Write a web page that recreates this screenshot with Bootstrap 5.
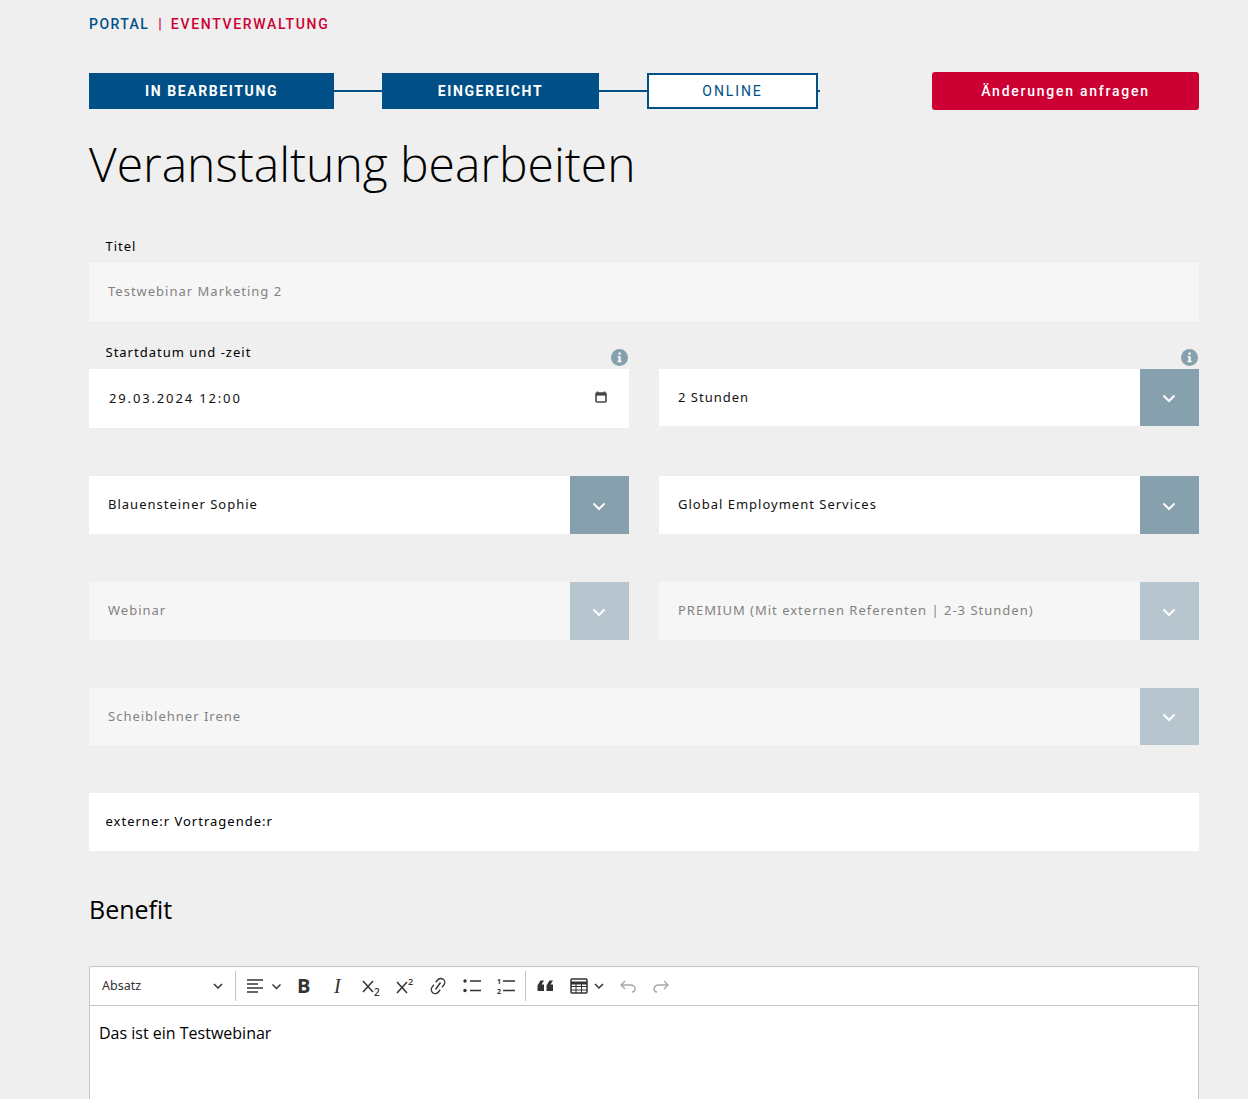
<!DOCTYPE html>
<html lang="de">
<head>
<meta charset="utf-8">
<title>Veranstaltung bearbeiten</title>
<link rel="stylesheet" href="https://cdn.jsdelivr.net/npm/bootstrap@5.3.0/dist/css/bootstrap.min.css">
<style>
html,body{height:1099px;overflow:hidden}
body{background:#efefef;font-family:"Noto Sans","Open Sans",sans-serif;color:#000}
.shell{width:1110px;margin-left:89px}
.crumbs{height:73px;padding-top:15px;font:500 14px/18px Roboto,sans-serif}
.crumb-a{color:#00508a;letter-spacing:1.45px}.crumb-b{color:#cc0033;letter-spacing:1.68px}.crumb-s{color:#cc0033;margin:0 9px}
.steps{height:36px}
.stepbox{height:36px;font:700 14px/18px Roboto,sans-serif;letter-spacing:1.6px;color:#fff;background:#005087;border:2px solid #005087}
.s1{width:245px}.s2{width:217px}.s3{width:171px;background:#fff;color:#005087;font-weight:400;letter-spacing:1.9px}
.stepline{height:2px;background:#005087}
.l1{width:48px}.l2{width:48px}.l3{width:2px;margin-right:auto}
.btn-change{width:267px;height:38px;margin-top:-1px;background:#cc0033;color:#fff;border:0;border-radius:3px;font:500 14px/18px Roboto,sans-serif;letter-spacing:1.75px}
.btn-change:hover{background:#cc0033;color:#fff}
.pagetitle{font:300 48px/58px "Open Sans",sans-serif;letter-spacing:-.02px;color:#000;margin:26px 0 0}
.lab{font-size:13px;line-height:18px;letter-spacing:1px;font-weight:400;color:#000;padding-left:16.5px;margin:0}
.lab1{margin-top:39px;height:31px;padding-top:5px}
.fieldbox{background:#fff;height:58px;font-size:13px;letter-spacing:1px;color:#111;padding-left:19px}
.fieldbox.off{background:#f6f6f6;color:#828282}
.gapper{--bs-gutter-x:30px;--bs-gutter-y:0}
.r-a{margin-top:18px}
.lab2{height:30px;padding-top:4px}
.hd{height:30px;position:relative}
.infodot{position:absolute;right:1px;bottom:3px;width:17px;height:17px}
.date{height:59px;padding-left:20px;padding-right:22px;letter-spacing:1.85px}
.calico{margin-top:-3px}
.h57{height:57px}
.chev{width:59px;background:#86a0ae}
.chev svg{margin:2px 2px 0 0}
.off .chev{background:#b7c6ce}
.mt48{margin-top:48px}
.ext{padding-left:16.5px;color:#000}
.benefit{font:500 25px/32px "Open Sans",sans-serif;letter-spacing:0;margin:42px 0 41px;color:#000}
.editor{background:#fff;border:1px solid #c4c4c4;border-bottom:0;border-radius:2px 2px 0 0;height:200px}
.tb{height:39px;border-bottom:1px solid #c4c4c4;padding-left:12px;color:#333}
.para{width:133px;font-size:12.5px;color:#333;padding-right:12px}
.sep{width:1px;height:30px;background:#c4c4c4;flex:none}
.sep2{margin-left:3px}
.tool{width:33.5px;height:24px;flex:none;color:#333;display:flex;align-items:center;justify-content:center}
.tool svg{display:block}
.tool-b{font:700 20px/24px "Open Sans",sans-serif}
.tool-i{font:italic 400 20px/24px "Liberation Serif",serif}
.first{margin-left:11px;width:40px;justify-content:flex-start}
.nudge{padding-left:2px}
.quo{margin-left:3px}
.tbl{width:38px;margin-left:6px}
.undo{margin-left:5px}
.edtext{font-size:16px;line-height:22px;padding:16px 9px;color:#000;font-family:"Open Sans",sans-serif}
</style>
</head>
<body>
<main class="shell">
  <div class="crumbs"><span class="crumb-a">PORTAL</span><span class="crumb-s">|</span><span class="crumb-b">EVENTVERWALTUNG</span></div>
  <div class="steps d-flex align-items-center">
    <div class="stepbox s1 d-flex align-items-center justify-content-center">IN BEARBEITUNG</div>
    <div class="stepline l1"></div>
    <div class="stepbox s2 d-flex align-items-center justify-content-center">EINGEREICHT</div>
    <div class="stepline l2"></div>
    <div class="stepbox s3 d-flex align-items-center justify-content-center">ONLINE</div>
    <div class="stepline l3"></div>
    <button type="button" class="btn btn-change p-0">Änderungen anfragen</button>
  </div>
  <h1 class="pagetitle">Veranstaltung bearbeiten</h1>

  <p class="lab lab1">Titel</p>
  <div class="fieldbox off d-flex align-items-center">Testwebinar Marketing 2</div>

  <div class="row gapper r-a">
    <div class="col-6">
      <div class="hd"><p class="lab lab2">Startdatum und -zeit</p>
        <svg class="infodot" viewBox="0 0 17 17"><circle cx="8.5" cy="8.5" r="8.5" fill="#86a0ae"/><rect x="7.5" y="3.5" width="2.2" height="2.2" fill="#fff"/><path d="M6.6 7.2h3v4.6h1v1.4H6.6v-1.4h1V8.6h-1z" fill="#fff"/></svg>
      </div>
      <div class="fieldbox date d-flex align-items-center justify-content-between">
        <span>29.03.2024 12:00</span>
        <svg class="calico" width="12" height="12" viewBox="0 0 12 12"><path d="M2.5 0.5v1.5M9.5 0.5v1.5" stroke="#444" stroke-width="1.6"/><rect x="1" y="2" width="10" height="9" rx="1" fill="none" stroke="#444" stroke-width="1.6"/><rect x="1" y="2" width="10" height="2.6" fill="#444"/></svg>
      </div>
    </div>
    <div class="col-6">
      <div class="hd">
        <svg class="infodot" viewBox="0 0 17 17"><circle cx="8.5" cy="8.5" r="8.5" fill="#86a0ae"/><rect x="7.5" y="3.5" width="2.2" height="2.2" fill="#fff"/><path d="M6.6 7.2h3v4.6h1v1.4H6.6v-1.4h1V8.6h-1z" fill="#fff"/></svg>
      </div>
      <div class="fieldbox h57 d-flex align-items-stretch pe-0">
        <span class="flex-grow-1 d-flex align-items-center">2 Stunden</span>
        <span class="chev d-flex align-items-center justify-content-center"><svg width="14" height="9" viewBox="0 0 14 9"><path d="M1.5 1.5 7 7l5.5-5.5" fill="none" stroke="#fff" stroke-width="2"/></svg></span>
      </div>
    </div>
  </div>

  <div class="row gapper mt48">
    <div class="col-6">
      <div class="fieldbox d-flex align-items-stretch pe-0">
        <span class="flex-grow-1 d-flex align-items-center">Blauensteiner Sophie</span>
        <span class="chev d-flex align-items-center justify-content-center"><svg width="14" height="9" viewBox="0 0 14 9"><path d="M1.5 1.5 7 7l5.5-5.5" fill="none" stroke="#fff" stroke-width="2"/></svg></span>
      </div>
    </div>
    <div class="col-6">
      <div class="fieldbox d-flex align-items-stretch pe-0">
        <span class="flex-grow-1 d-flex align-items-center">Global Employment Services</span>
        <span class="chev d-flex align-items-center justify-content-center"><svg width="14" height="9" viewBox="0 0 14 9"><path d="M1.5 1.5 7 7l5.5-5.5" fill="none" stroke="#fff" stroke-width="2"/></svg></span>
      </div>
    </div>
  </div>

  <div class="row gapper mt48">
    <div class="col-6">
      <div class="fieldbox off d-flex align-items-stretch pe-0">
        <span class="flex-grow-1 d-flex align-items-center">Webinar</span>
        <span class="chev d-flex align-items-center justify-content-center"><svg width="14" height="9" viewBox="0 0 14 9"><path d="M1.5 1.5 7 7l5.5-5.5" fill="none" stroke="#fff" stroke-width="2"/></svg></span>
      </div>
    </div>
    <div class="col-6">
      <div class="fieldbox off d-flex align-items-stretch pe-0">
        <span class="flex-grow-1 d-flex align-items-center">PREMIUM (Mit externen Referenten | 2-3 Stunden)</span>
        <span class="chev d-flex align-items-center justify-content-center"><svg width="14" height="9" viewBox="0 0 14 9"><path d="M1.5 1.5 7 7l5.5-5.5" fill="none" stroke="#fff" stroke-width="2"/></svg></span>
      </div>
    </div>
  </div>

  <div class="fieldbox off h57 d-flex align-items-stretch pe-0 mt48">
    <span class="flex-grow-1 d-flex align-items-center">Scheiblehner Irene</span>
    <span class="chev d-flex align-items-center justify-content-center"><svg width="14" height="9" viewBox="0 0 14 9"><path d="M1.5 1.5 7 7l5.5-5.5" fill="none" stroke="#fff" stroke-width="2"/></svg></span>
  </div>

  <div class="fieldbox ext d-flex align-items-center mt48">externe:r Vortragende:r</div>

  <h2 class="benefit">Benefit</h2>

  <section class="editor">
    <div class="tb d-flex align-items-center">
      <div class="para d-flex align-items-center justify-content-between"><span>Absatz</span><svg width="10" height="6" viewBox="0 0 10 6"><path d="M1 1l4 4 4-4" fill="none" stroke="#333" stroke-width="1.5"/></svg></div>
      <span class="sep"></span>
      <span class="tool first"><svg width="36" height="20" viewBox="0 0 36 20"><path d="M0 4h16M0 8h11M0 12h16M0 16h11" stroke="#333" stroke-width="1.4"/><path d="M25.500 8.500l4 4 4-4" fill="none" stroke="#333" stroke-width="1.5"/></svg></span>
      <span class="tool tool-b">B</span>
      <span class="tool tool-i">I</span>
      <span class="tool"><svg width="22" height="24" viewBox="0 0 22 24"><path d="M3 7l10 11M13 7 3 18" stroke="#333" stroke-width="1.5"/><text x="14" y="22" font-size="10" font-family="Open Sans" font-weight="600" fill="#333">2</text></svg></span>
      <span class="tool nudge"><svg width="22" height="24" viewBox="0 0 22 24"><path d="M3 8l10 11M13 8 3 19" stroke="#333" stroke-width="1.5"/><text x="14" y="11" font-size="9" font-family="Open Sans" font-weight="600" fill="#333">2</text></svg></span>
      <span class="tool"><svg width="18" height="20" viewBox="0 0 18 20"><rect x="5" y="1.500" width="8" height="17" rx="4" transform="rotate(38 9 10)" fill="none" stroke="#333" stroke-width="1.400"/><path d="M4 6 14 14" stroke="#fff" stroke-width="3"/><path d="M6.500 13.500 11.500 6.500" stroke="#333" stroke-width="1.400"/></svg></span>
      <span class="tool nudge"><svg width="20" height="20" viewBox="0 0 20 20"><circle cx="3" cy="5" r="1.700" fill="#333"/><circle cx="3" cy="14.500" r="1.700" fill="#333"/><path d="M8 5h11M8 14.500h11" stroke="#333" stroke-width="1.500"/></svg></span>
      <span class="tool nudge"><svg width="20" height="20" viewBox="0 0 20 20"><text x="1" y="8" font-size="7" font-weight="700" font-family="Open Sans" fill="#333">1</text><text x="1" y="18" font-size="7" font-weight="700" font-family="Open Sans" fill="#333">2</text><path d="M7 5h12M7 14.500h12" stroke="#333" stroke-width="1.500"/></svg></span>
      <span class="sep sep2"></span>
      <span class="tool quo"><svg width="16" height="20" viewBox="0 0 16 20"><path d="M7 4.500 4.500 8.500H7V15H.5V9.500L3.500 4.500zM16 4.500l-2.500 4H16V15H9.500V9.500l3-5z" fill="#333"/></svg></span>
      <span class="tool tbl"><svg width="34" height="20" viewBox="0 0 34 20"><rect x="1" y="3" width="16" height="14" rx="1" fill="#fff" stroke="#333" stroke-width="1.500"/><path d="M1 7h16" stroke="#333" stroke-width="3"/><path d="M1 10.500h16M1 14h16M6 7v10M11.500 7v10" stroke="#333" stroke-width="1"/><path d="M25 8l4 4 4-4" fill="none" stroke="#333" stroke-width="1.500"/></svg></span>
      <span class="tool undo"><svg width="18" height="20" viewBox="0 0 18 20"><path d="M6 5 2 9l4 4M2 9h9c4 0 5 2.500 5 4s-1 3-3 3" fill="none" stroke="#a8a8a8" stroke-width="1.400"/></svg></span>
      <span class="tool"><svg width="18" height="20" viewBox="0 0 18 20"><path d="M12 5l4 4-4 4M16 9H7c-4 0-5 2.500-5 4s1 3 3 3" fill="none" stroke="#a8a8a8" stroke-width="1.400"/></svg></span>
    </div>
    <div class="edtext">Das ist ein Testwebinar</div>
  </section>
</main>
</body>
</html>
